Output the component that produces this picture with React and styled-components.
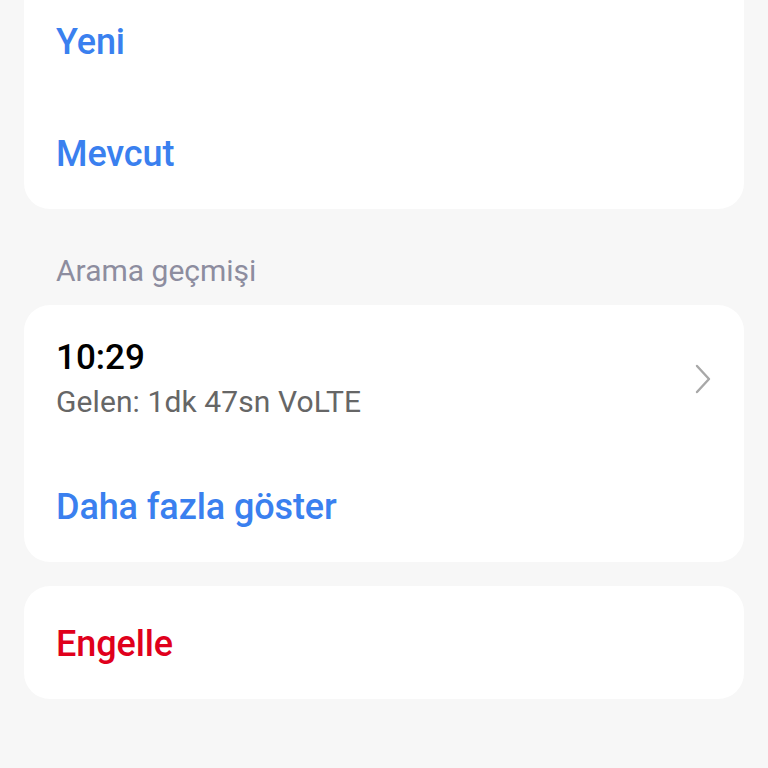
import React from "react";
import styled, { createGlobalStyle } from "styled-components";

const Global = createGlobalStyle`
  html, body { margin: 0; padding: 0; background: #f7f7f7; }
  body { font-family: Roboto, "Noto Sans", sans-serif; overflow: hidden; }
  * { box-sizing: border-box; }
`;

const Page = styled.div`
  width: 768px;
  height: 768px;
  overflow: hidden;
  background: #f7f7f7;
  padding: 0 24px;
  display: flex;
  flex-direction: column;
`;

const Card = styled.div`
  background: #ffffff;
  border-radius: 26px;
  display: flex;
  flex-direction: column;
  padding: 0 32px;
  margin-top: ${(p) => p.$mt || 0}px;
  ${(p) => p.$cutTop && "border-top-left-radius: 0; border-top-right-radius: 0;"}
`;

const Row = styled.div`
  height: ${(p) => p.$h || 112}px;
  padding-top: 2px;
  display: flex;
  align-items: center;
  justify-content: space-between;
`;

const Action = styled.div`
  font-size: 36px;
  font-weight: 500;
  color: ${(p) => (p.$danger ? "#e0001c" : "#3a80ef")};
  letter-spacing: -0.1px;
`;

const SectionHeader = styled.div`
  font-size: 30px;
  color: #8d8d9f;
  padding: 26px 32px 0;
  height: 96px;
  display: flex;
  align-items: center;
`;

const CallInfo = styled.div`
  display: flex;
  flex-direction: column;
  gap: 6px;
`;

const Time = styled.div`
  font-size: 35px;
  font-weight: 500;
  color: #000;
  line-height: 40px;
`;

const Detail = styled.div`
  font-size: 30px;
  color: #666666;
  line-height: 36px;
  letter-spacing: 0.1px;
`;

const Chevron = () => (
  <svg width="18" height="30" viewBox="0 0 18 30" fill="none">
    <path d="M3 2 L15 15 L3 28" stroke="#a8a8a8" strokeWidth="2.4" strokeLinecap="round" strokeLinejoin="round" />
  </svg>
);

export default function App() {
  return (
    <>
      <Global />
      <Page>
        <Card $mt={-15} $cutTop>
          <Row><Action>Yeni</Action></Row>
          <Row><Action>Mevcut</Action></Row>
        </Card>
        <SectionHeader>Arama geçmişi</SectionHeader>
        <Card>
          <Row $h={145}>
            <CallInfo>
              <Time>10:29</Time>
              <Detail>Gelen: 1dk 47sn VoLTE</Detail>
            </CallInfo>
            <Chevron />
          </Row>
          <Row><Action>Daha fazla göster</Action></Row>
        </Card>
        <Card $mt={24}>
          <Row $h={113}><Action $danger>Engelle</Action></Row>
        </Card>
      </Page>
    </>
  );
}
